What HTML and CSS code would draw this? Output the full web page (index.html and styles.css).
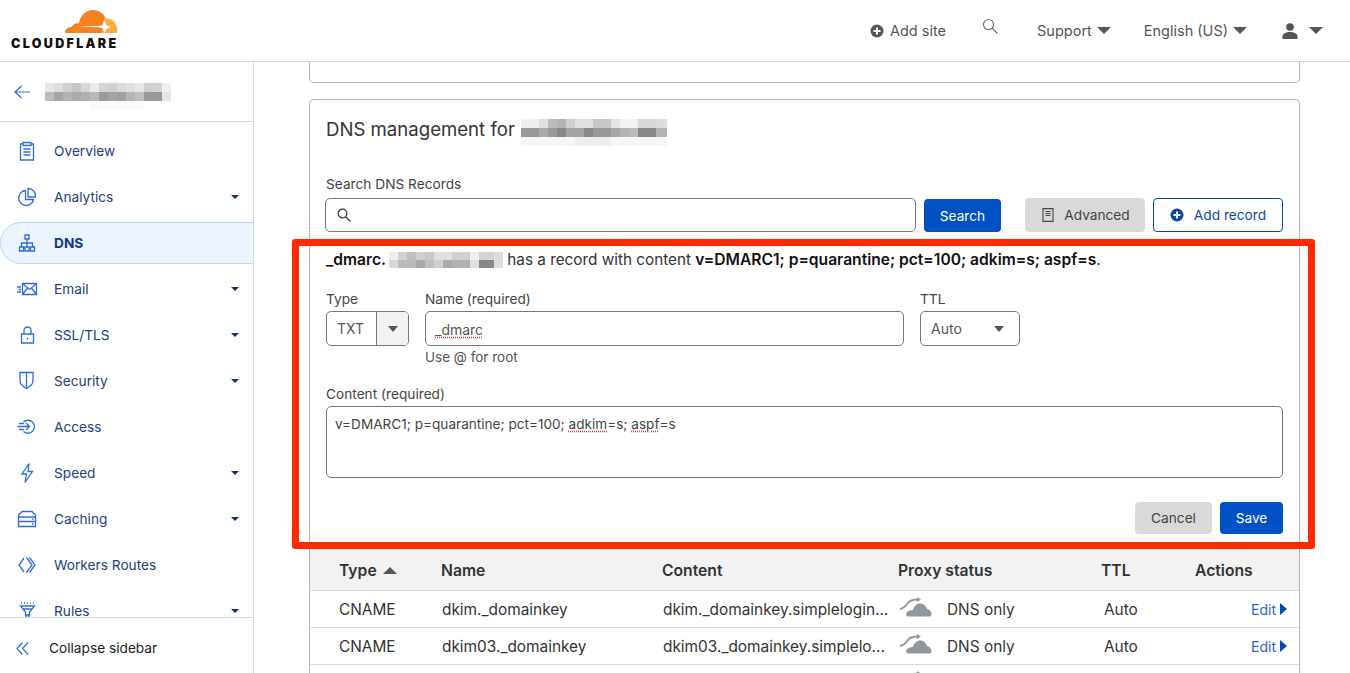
FILE: index.html
```html
<!DOCTYPE html>
<html lang="en">
<head>
<meta charset="UTF-8" />
<title>DNS | Cloudflare</title>
<link rel="stylesheet" href="styles.css">
</head>
<body>

<header class="topbar">
  <div class="logo">
    <svg class="logo-cloud" width="52" height="24" viewBox="0 0 52 24">
      <path fill="#f6821f" d="M0 23C0 19.500 3 17 6.500 17C8 14.500 11 12.800 14 13.500C15 5.500 21 0 28 0C33.500 0 38.500 3 40.500 8.500C38 9.500 37.500 13 38.800 15.500L38.800 23Z"/>
      <path fill="#fbad41" d="M36.500 23C38 19 38 17.500 37.500 15.500C37 11 39 8.500 42 8.500C47.500 8.500 51.500 13 52 18.500L52 23Z"/>
      <path fill="#fff" d="M11 16.500L32 16L37 15.500C38 13 39 11.500 40 10C40 12 40.500 14 41.500 15.500C43 16 44.500 16.500 46 17C44 17.500 42.500 18 41.500 19C40.500 20.500 40 22 39.500 23.500C39 21.500 38 19.500 37 18L32 17.200Z"/>
    </svg>
    <span class="logo-text">CLOUDFLARE</span>
  </div>
  <nav class="top-nav">
    <span class="top-link add-site">
      <svg width="14" height="14" viewBox="0 0 14 14"><circle cx="7" cy="7" r="6.500" fill="#555"/><path d="M7 3.500v7M3.500 7h7" stroke="#fff" stroke-width="2"/></svg>
      Add site
    </span>
    <svg class="top-search" width="17" height="17" viewBox="0 0 17 17" fill="none" stroke="#666" stroke-width="1.100"><circle cx="6.500" cy="6.500" r="5"/><path d="M10 10.200l5.500 5.300"/></svg>
    <span class="top-link support">Support <i class="caret"></i></span>
    <span class="top-link lang">English (US) <i class="caret"></i></span>
    <span class="top-link user">
      <svg width="16" height="16" viewBox="0 0 16 16" fill="#555"><circle cx="8" cy="4" r="3.800"/><path d="M0.500 16v-2.500C0.500 10.500 4 9 8 9s7.500 1.500 7.500 4.500V16z"/></svg>
      <i class="caret"></i>
    </span>
  </nav>
</header>

<div class="layout">
  <aside class="sidebar">
    <div class="back-row">
      <svg width="16" height="14" viewBox="0 0 16 14" fill="none" stroke="#2f6dd5" stroke-width="1.200"><path d="M7.500 1L1 7l6.500 6M1 7h15"/></svg>
      <div class="redact redact-side"></div>
    </div>

    <ul class="nav-list">
      <li class="nav-item">
        <svg class="nav-icon" viewBox="0 0 24 24"><path d="M8 5H5.500v16h13V5H16"/><path d="M8 3.500h8v3H8zM8.500 10h7M8.500 13h7M8.500 16h7"/></svg>
        Overview
      </li>
      <li class="nav-item has-sub">
        <svg class="nav-icon" viewBox="0 0 24 24"><path d="M10.500 5.500a7.500 7.500 0 1 0 8 9h-8z"/><path d="M13 3.500a7.500 7.500 0 0 1 7.500 8.500H13z"/></svg>
        Analytics
        <i class="nav-caret"></i>
      </li>
      <li class="nav-item active">
        <svg class="nav-icon" viewBox="0 0 24 24"><path d="M10 4h4v4h-4zM4.500 16h4v4h-4zM10 16h4v4h-4zM15.500 16h4v4h-4zM12 8v8M6.500 16v-4h11v4"/></svg>
        DNS
      </li>
      <li class="nav-item has-sub">
        <svg class="nav-icon" viewBox="0 0 24 24"><path d="M7.500 6.500h14v11h-14zM7.500 6.500l7 6 7-6M7.500 17.500l5-6.500M21.500 17.500l-5-6.500M2 10h4M3.500 12.500H6M2 15h4"/></svg>
        Email
        <i class="nav-caret"></i>
      </li>
      <li class="nav-item has-sub">
        <svg class="nav-icon" viewBox="0 0 24 24"><path d="M6.500 11h12v9h-12zM9 11V7.500a3.500 3.500 0 0 1 7 0V11M12.500 14.500v2"/></svg>
        SSL/TLS
        <i class="nav-caret"></i>
      </li>
      <li class="nav-item has-sub">
        <svg class="nav-icon" viewBox="0 0 24 24"><path d="M5 3.500h13v8c0 3.500-2.500 6-6.500 8-4-2-6.500-4.500-6.500-8zM11.500 3.500v16"/></svg>
        Security
        <i class="nav-caret"></i>
      </li>
      <li class="nav-item">
        <svg class="nav-icon" viewBox="0 0 24 24"><path d="M8.500 7a6.500 6.500 0 1 1 0 9.500M2.500 11.500h12M11 8l3.500 3.500-3.500 3.500M4 8.500h5M4 14.500h5"/></svg>
        Access
      </li>
      <li class="nav-item has-sub">
        <svg class="nav-icon" viewBox="0 0 24 24"><path d="M14 2.500L7 13h4.500L10 21.500 17.500 10.500h-4.500z"/></svg>
        Speed
        <i class="nav-caret"></i>
      </li>
      <li class="nav-item has-sub">
        <svg class="nav-icon" viewBox="0 0 24 24"><path d="M7 4.500h10l3.500 3.500v11.500h-17V8zM3.500 10h17M3.500 14.500h17M17 12.200h1.500M17 17h1.500"/></svg>
        Caching
        <i class="nav-caret"></i>
      </li>
      <li class="nav-item">
        <svg class="nav-icon" viewBox="0 0 24 24"><path d="M9 5l-5 7 5 7M11.500 4.500L17 12l-5.500 7.500M14.500 4.500L20 12l-5.500 7.500"/></svg>
        Workers Routes
      </li>
      <li class="nav-item has-sub">
        <svg class="nav-icon" viewBox="0 0 24 24"><path d="M6 4h1M9 4h1M12 4h1M15 4h1M18 4h1M5.500 7h14l-5 6v3h-4v-3zM8 10h9M10.500 16l2 5 2-5"/></svg>
        Rules
        <i class="nav-caret"></i>
      </li>
    </ul>

    <div class="collapse-row">
      <svg width="13" height="13" viewBox="0 0 13 13" fill="none" stroke="#2f6dd5" stroke-width="1.200"><path d="M6.500 0.500L1 6.500l5.500 6M12 0.500L6.500 6.500l5.500 6"/></svg>
      Collapse sidebar
    </div>
  </aside>

  <main class="main">
    <div class="card-prev"></div>

    <section class="card">
      <h2 class="card-title">DNS management for <span class="redact redact-title"></span></h2>

      <label class="field-label search-label">Search DNS Records</label>
      <div class="search-row">
        <div class="search-box">
          <svg width="14" height="14" viewBox="0 0 14 14" fill="none" stroke="#333" stroke-width="1.200"><circle cx="5.500" cy="5.500" r="4.300"/><path d="M8.500 8.700l5 4.800"/></svg>
        </div>
        <button class="btn btn-primary btn-search">Search</button>
        <button class="btn btn-grey btn-advanced">
          <svg width="12" height="14" viewBox="0 0 12 14" fill="none" stroke="#444" stroke-width="1.100"><path d="M1 0.600h10v12.800H1zM3.500 3.500h5M3.500 5.500h5M3.500 7.500h5"/></svg>
          Advanced
        </button>
        <button class="btn btn-outline">
          <svg width="14" height="14" viewBox="0 0 14 14"><circle cx="7" cy="7" r="6.500" fill="#0a47ad"/><path d="M7 3.500v7M3.500 7h7" stroke="#fff" stroke-width="2"/></svg>
          Add record
        </button>
      </div>

      <p class="record-msg"><b>_dmarc.</b><span class="redact redact-msg"></span> has a record with content <b>v=DMARC1; p=quarantine; pct=100; adkim=s; aspf=s</b>.</p>

      <div class="form-row">
        <div class="col-type">
          <label class="field-label">Type</label>
          <div class="type-select">
            <span class="type-value">TXT</span>
            <span class="type-arrow"><i class="caret-small"></i></span>
          </div>
        </div>
        <div class="col-name">
          <label class="field-label">Name (required)</label>
          <div class="text-field"><span class="spell">_dmarc</span></div>
          <div class="field-help">Use @ for root</div>
        </div>
        <div class="col-ttl">
          <label class="field-label">TTL</label>
          <div class="ttl-select">Auto <i class="caret-small"></i></div>
        </div>
      </div>

      <label class="field-label content-label">Content (required)</label>
      <div class="text-area">v=DMARC1; p=quarantine; pct=100; <span class="spell">adkim</span>=s; <span class="spell">aspf</span>=s</div>

      <div class="form-actions">
        <button class="btn btn-grey btn-cancel">Cancel</button>
        <button class="btn btn-primary btn-save">Save</button>
      </div>

      <div class="highlight-box"></div>

      <div class="records">
        <div class="rec-row rec-head">
          <span class="c-type">Type <i class="sort-up"></i></span>
          <span class="c-name">Name</span>
          <span class="c-content">Content</span>
          <span class="c-proxy">Proxy status</span>
          <span class="c-ttl">TTL</span>
          <span class="c-actions">Actions</span>
        </div>
        <div class="rec-row">
          <span class="c-type">CNAME</span>
          <span class="c-name">dkim._domainkey</span>
          <span class="c-content">dkim._domainkey.simplelogin...</span>
          <span class="c-proxy">
            <svg class="dns-cloud" width="32" height="20" viewBox="0 0 32 20"><use href="#grey-cloud"/></svg>
            DNS only
          </span>
          <span class="c-ttl">Auto</span>
          <span class="c-actions"><a class="edit-link">Edit <i class="edit-arrow"></i></a></span>
        </div>
        <div class="rec-row">
          <span class="c-type">CNAME</span>
          <span class="c-name">dkim03._domainkey</span>
          <span class="c-content">dkim03._domainkey.simplelo...</span>
          <span class="c-proxy">
            <svg class="dns-cloud" width="32" height="20" viewBox="0 0 32 20"><use href="#grey-cloud"/></svg>
            DNS only
          </span>
          <span class="c-ttl">Auto</span>
          <span class="c-actions"><a class="edit-link">Edit <i class="edit-arrow"></i></a></span>
        </div>
        <div class="rec-row">
          <span class="c-type"></span>
          <span class="c-name"></span>
          <span class="c-content"></span>
          <span class="c-proxy">
            <svg class="dns-cloud" width="32" height="20" viewBox="0 0 32 20"><use href="#grey-cloud"/></svg>
          </span>
        </div>
      </div>
    </section>
  </main>
</div>

<!-- nuvem cinza usada nas linhas da tabela -->
<svg class="defs" width="0" height="0">
  <defs>
    <g id="grey-cloud">
      <path fill="#92979b" d="M8 19.500C5.500 19.500 5.500 14.500 9 14C10 13 12 13 13 13C14 9 17 6.500 20 6.500C24 6.500 26 9 27 12C30 12.500 31.500 15 31.500 17C31.500 19 30.500 19.500 29 19.500Z"/>
      <path fill="none" stroke="#92979b" stroke-width="2" d="M0 12C3 11.500 5 10 7.500 6.500C9 4 12 2.500 18 2.500"/>
      <path fill="#92979b" d="M17 0L21 2.500L17 5Z"/>
    </g>
  </defs>
</svg>

</body>
</html>
```

FILE: styles.css
```css
* { box-sizing: border-box; }

html, body {
  margin: 0;
  padding: 0;
  height: 100%;
  overflow: hidden;
}
body {
  font-family: Inter, "Liberation Sans", sans-serif;
  font-size: 14px;
  color: #333;
  background: #fff;
  display: flex;
  flex-direction: column;
}
i { display: inline-block; }
ul { list-style: none; margin: 0; padding: 0; }
p, h2 { margin: 0; }
.defs { position: absolute; }

/* Topo */
.topbar {
  height: 62px;
  flex: none;
  border-bottom: 1px solid #d9d9d9;
  display: flex;
  justify-content: space-between;
}
.logo {
  width: 130px;
  padding: 10px 0 0 11px;
  display: flex;
  flex-direction: column;
  align-items: flex-end;
}
.logo-cloud { display: block; margin-right: 13px; }
.logo-text {
  align-self: flex-start;
  font-size: 12.500px;
  font-weight: 900;
  letter-spacing: 2.340px;
  color: #111;
  line-height: 13px;
  margin-top: 3px;
  white-space: nowrap;
}
.top-nav {
  display: flex;
  align-items: center;
  height: 61px;
  padding-right: 27px;
  color: #555;
  font-size: 14.500px;
}
.top-link { display: flex; align-items: center; gap: 5px; white-space: nowrap; }
.add-site { gap: 6px; }
.top-search { margin: -8px 0 0 36px; }
.support { margin-left: 38px; }
.lang { margin-left: 33px; }
.user { margin-left: 35px; gap: 11px; }
.caret {
  width: 0;
  height: 0;
  border-left: 7px solid transparent;
  border-right: 7px solid transparent;
  border-top: 7px solid #555;
}

.layout { flex: 1; display: flex; min-height: 0; }

/* Barra lateral */
.sidebar {
  width: 254px;
  flex: none;
  border-right: 1px solid #d9d9d9;
  display: flex;
  flex-direction: column;
}
.back-row {
  height: 60px;
  flex: none;
  border-bottom: 1px solid #d9d9d9;
  padding-left: 14px;
  display: flex;
  align-items: center;
  gap: 15px;
}
.nav-list {
  flex: 1;
  min-height: 0;
  overflow: hidden;
  padding-top: 6px;
}
.nav-item {
  height: 46px;
  padding: 0 0 1px 15px;
  display: flex;
  align-items: center;
  gap: 15px;
  color: #25407f;
  font-size: 13.700px;
}
.nav-icon {
  width: 24px;
  height: 24px;
  flex: none;
  fill: none;
  stroke: #2f6dd5;
  stroke-width: 1.300;
}
.nav-caret {
  width: 0;
  height: 0;
  margin-left: auto;
  margin-right: 14px;
  border-left: 4px solid transparent;
  border-right: 4px solid transparent;
  border-top: 4px solid #12306e;
}
.nav-item.active {
  height: 42px;
  margin: 2px 0;
  background: #ebf3fd;
  border: 1px solid #bcd7f8;
  border-right: none;
  border-radius: 21px 0 0 21px;
  padding-left: 14px;
  font-weight: 700;
  color: #123b84;
}
.collapse-row {
  height: 56px;
  flex: none;
  border-top: 1px solid #d9d9d9;
  padding: 5px 0 0 16px;
  display: flex;
  align-items: center;
  gap: 20px;
  color: #222;
  font-size: 13.700px;
}

/* Trechos borrados */
.redact {
  display: inline-block;
  background-repeat: no-repeat;
  background-size: 100% 9px;
  background-position: 0 0, 0 9px, 0 18px;
}
.redact-side {
  width: 126px;
  height: 27px;
  margin-top: 9px;
  background-image:
    linear-gradient(to right, #e6e6e6 0 9px, #dedede 0 18px, #cfcfcf 0 27px, #c6c6c6 0 36px, #d6d6d6 0 45px, #eaeaea 0 54px, #d4d4d4 0 63px, #d0d0d0 0 72px, #dadada 0 81px, #e0e0e0 0 90px, #e8e8e8 0 99px, #d0d0d0 0 108px, #d4d4d4 0 117px, #f0f0f0 0),
    linear-gradient(to right, #bcbcbc 0 9px, #a6a6a6 0 18px, #b2b2b2 0 27px, #aaa 0 36px, #b0b0b0 0 45px, #b8b8b8 0 54px, #999 0 63px, #a4a4a4 0 72px, #a0a0a0 0 81px, #b4b4b4 0 90px, #c0c0c0 0 99px, #999 0 117px, #e6e6e6 0),
    linear-gradient(to right, #fff 0 45px, #fafafa 0 99px, #fff 0);
}
.redact-title {
  flex: none;
  width: 146px;
  height: 27px;
  margin-top: 2px;
  background-image:
    linear-gradient(to right, #eee 0 18px, #e0e0e0 0 27px, #bcbcbc 0 36px, #b4b4b4 0 45px, #cfcfcf 0 54px, #e0e0e0 0 72px, #c8c8c8 0 90px, #e4e4e4 0 99px, #f2f2f2 0 117px, #d8d8d8 0 135px, #ddd 0),
    linear-gradient(to right, #999 0 18px, #aaa 0 27px, #999 0 36px, #888 0 45px, #a4a4a4 0 63px, #888 0 72px, #999 0 90px, #a8a8a8 0 99px, #b4b4b4 0 108px, #bbb 0 117px, #888 0 135px, #b4b4b4 0),
    linear-gradient(to right, #f6f6f6 0 54px, #eee 0 90px, #f6f6f6 0);
}
.redact-msg {
  width: 114px;
  height: 16px;
  margin-left: 3px;
  vertical-align: -3px;
  background-size: 100% 8px;
  background-position: 0 0, 0 8px;
  background-image:
    linear-gradient(to right, #eee 0 9px, #d0d0d0 0 18px, #c0c0c0 0 27px, #cfcfcf 0 36px, #c8c8c8 0 45px, #e0e0e0 0 63px, #d0d0d0 0 81px, #eee 0 90px, #d4d4d4 0 105px, #ddd 0),
    linear-gradient(to right, #d8d8d8 0 9px, #bbb 0 27px, #aaa 0 36px, #c0c0c0 0 45px, #d0d0d0 0 54px, #aaa 0 63px, #b0b0b0 0 81px, #e0e0e0 0 90px, #888 0 105px, #ddd 0);
}

/* Conteudo */
.main {
  flex: 1;
  min-width: 0;
  overflow: hidden;
  padding: 0 50px 0 55px;
}
.card-prev {
  height: 21px;
  margin-bottom: 16px;
  border: 1px solid #b5b5b5;
  border-top: none;
  border-radius: 0 0 5px 5px;
}
.card {
  position: relative;
  border: 1px solid #b5b5b5;
  border-bottom: none;
  border-radius: 5px 5px 0 0;
  padding: 17px 16px 0 16px;
}
.card-title {
  height: 24px;
  display: flex;
  align-items: flex-start;
  gap: 6px;
  font-size: 18.600px;
  font-weight: 400;
  line-height: 24px;
  color: #333;
  white-space: nowrap;
}
.field-label {
  display: block;
  font-size: 13.700px;
  line-height: 20px;
  margin-bottom: 2px;
  color: #444;
}
.search-label { margin-top: 33px; margin-bottom: 4px; }
.search-row { display: flex; margin-left: -1px; }
.search-box {
  width: 591px;
  height: 34px;
  border: 1px solid #777;
  border-radius: 5px;
  padding-left: 11px;
  display: flex;
  align-items: center;
}
.btn {
  height: 33px;
  border-radius: 4px;
  border: 1px solid transparent;
  font-family: inherit;
  font-size: 13.700px;
  padding: 0;
  display: flex;
  align-items: center;
  justify-content: center;
}
.btn-primary { background: #0051c3; color: #fff; }
.btn-grey { background: #d9d9d9; color: #444; }
.btn-search { width: 77px; margin: 1px 0 0 8px; }
.btn-advanced { width: 120px; height: 34px; margin-left: 24px; gap: 10px; padding-left: 2px; }
.btn-outline {
  width: 130px;
  height: 34px;
  margin-left: 8px;
  gap: 10px;
  background: #fff;
  border-color: #0a47ad;
  color: #0a47ad;
}
.record-msg {
  height: 20px;
  margin-top: 18px;
  font-size: 15.300px;
  line-height: 20px;
  color: #333;
  white-space: nowrap;
}
.record-msg b { color: #111; font-size: 15.600px; font-weight: 600; }

.form-row { display: flex; margin-top: 19px; }
.col-type { width: 99px; }
.col-name { width: 495px; }
.type-select {
  width: 83px;
  height: 35px;
  border: 1px solid #777;
  border-radius: 5px;
  display: flex;
  overflow: hidden;
}
.type-value {
  width: 50px;
  padding-left: 10px;
  line-height: 33px;
  color: #555;
  border-right: 1px solid #777;
}
.type-arrow {
  flex: 1;
  background: #f2f2f2;
  display: flex;
  align-items: center;
  justify-content: center;
}
.caret-small {
  width: 0;
  height: 0;
  border-left: 5px solid transparent;
  border-right: 5px solid transparent;
  border-top: 6px solid #555;
}
.text-field {
  width: 479px;
  height: 35px;
  border: 1px solid #777;
  border-radius: 5px;
  padding-left: 9px;
  line-height: 35px;
  color: #555;
}
.spell { text-decoration: underline dotted #e2333b; text-underline-offset: 2px; }
.field-help { line-height: 20px; margin-top: 1px; color: #555; font-size: 13.500px; }
.ttl-select {
  width: 100px;
  height: 35px;
  border: 1px solid #777;
  border-radius: 5px;
  padding: 0 15px 0 10px;
  display: flex;
  align-items: center;
  justify-content: space-between;
  color: #555;
}
.content-label { margin-top: 17px; }
.text-area {
  height: 72px;
  border: 1px solid #777;
  border-radius: 5px;
  padding: 8px 8px;
  font-size: 13.600px;
  line-height: 18px;
  color: #444;
}
.form-actions {
  display: flex;
  justify-content: flex-end;
  gap: 8px;
  margin-top: 24px;
}
.btn-cancel { width: 77px; height: 32px; }
.btn-save { width: 63px; height: 32px; }

/* Moldura vermelha da anotacao */
.highlight-box {
  position: absolute;
  left: -18px;
  top: 139px;
  width: 1023px;
  height: 310px;
  border: 7px solid #ff2a00;
  border-radius: 3px;
  pointer-events: none;
}

/* Tabela de registros */
.records { margin: 12px -16px 0 -16px; }
.rec-row {
  height: 37px;
  border-bottom: 1px solid #d9d9d9;
  display: flex;
  align-items: center;
  font-size: 15.400px;
  color: #333;
  white-space: nowrap;
}
.rec-head {
  height: 45px;
  padding-top: 4px;
  background: #f2f2f2;
  font-size: 15.700px;
  font-weight: 600;
}
.c-type { width: 131px; padding-left: 29px; display: flex; align-items: center; gap: 6px; }
.c-name { width: 221px; }
.c-content { width: 236px; }
.c-proxy { width: 203px; display: flex; align-items: center; gap: 15px; }
.c-ttl { width: 94px; }
.c-actions { flex: 1; }
.rec-row:not(.rec-head) .c-name,
.rec-row:not(.rec-head) .c-content { padding-left: 1px; }
.rec-row:not(.rec-head) .c-proxy { padding-left: 2px; }
.rec-row:not(.rec-head) .c-ttl { padding-left: 3px; }
.dns-cloud { margin-top: -4px; }
.sort-up {
  width: 0;
  height: 0;
  border-left: 7px solid transparent;
  border-right: 7px solid transparent;
  border-bottom: 7px solid #555;
}
.edit-link {
  display: flex;
  justify-content: flex-end;
  align-items: center;
  gap: 4px;
  padding-right: 12px;
  font-size: 14px;
  color: #2c62c9;
}
.edit-arrow {
  width: 0;
  height: 0;
  border-top: 6px solid transparent;
  border-bottom: 6px solid transparent;
  border-left: 7px solid #0a47ad;
}
```
